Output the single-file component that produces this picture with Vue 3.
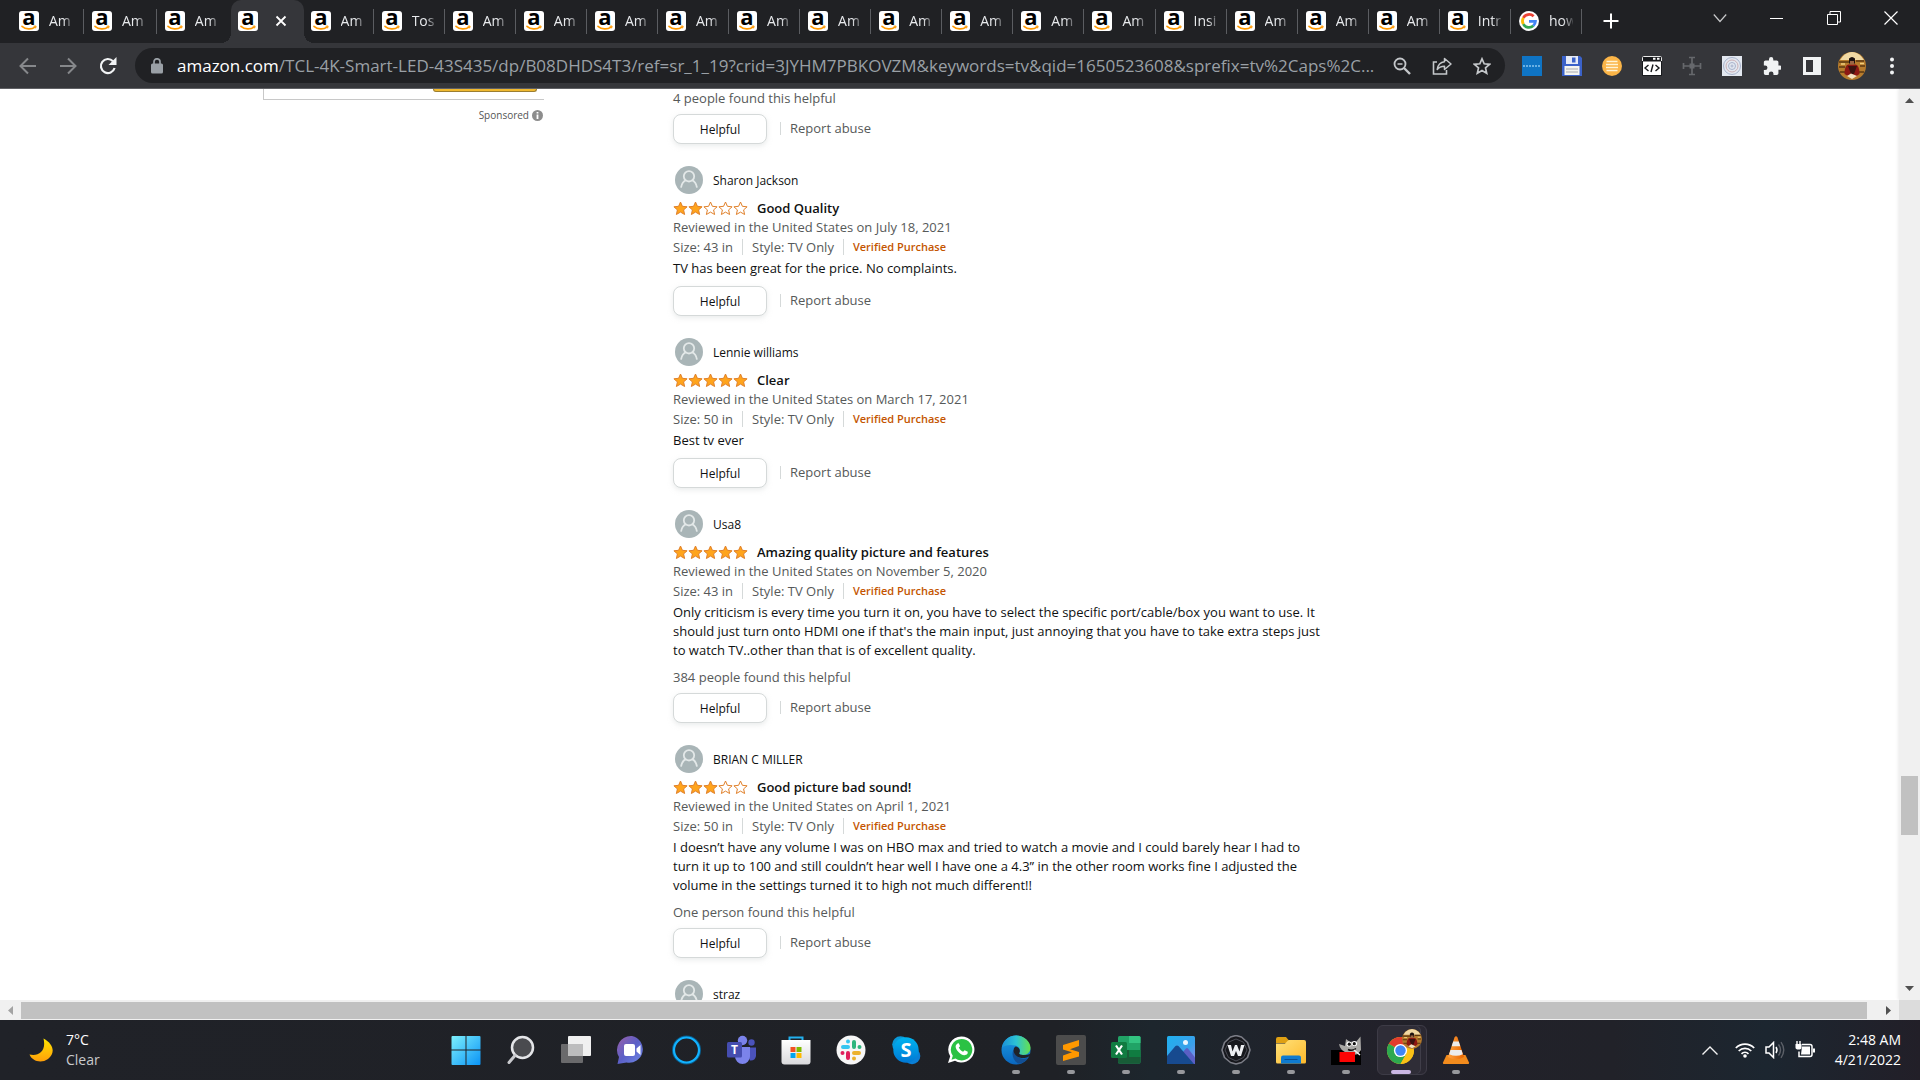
<script setup>
const tabs = [
  'Am', 'Am', 'Am', '', 'Am', 'Tos', 'Am', 'Am', 'Am', 'Am', 'Am',
  'Am', 'Am', 'Am', 'Am', 'Am', 'Insi', 'Am', 'Am', 'Am', 'Intr', 'how'
].map((title, i) => ({ title, active: i === 3, wide: i < 4, google: i === 21, line: i !== 2 && i !== 3 }))

const reviews = [
  {
    name: 'Sharon Jackson', stars: 2, title: 'Good Quality', date: 'July 18, 2021', size: '43 in',
    body: 'TV has been great for the price. No complaints.'
  },
  {
    name: 'Lennie williams', stars: 5, title: 'Clear', date: 'March 17, 2021', size: '50 in',
    body: 'Best tv ever'
  },
  {
    name: 'Usa8', stars: 5, title: 'Amazing quality picture and features', date: 'November 5, 2020', size: '43 in',
    body: 'Only criticism is every time you turn it on, you have to select the specific port/cable/box you want to use. It\nshould just turn onto HDMI one if that\'s the main input, just annoying that you have to take extra steps just\nto watch TV..other than that is of excellent quality.',
    votes: '384 people found this helpful'
  },
  {
    name: 'BRIAN C MILLER', stars: 3, title: 'Good picture bad sound!', date: 'April 1, 2021', size: '50 in',
    body: 'I doesn’t have any volume I was on HBO max and tried to watch a movie and I could barely hear I had to\nturn it up to 100 and still couldn’t hear well I have one a 4.3” in the other room works fine I adjusted the\nvolume in the settings turned it to high not much different!!',
    votes: 'One person found this helpful'
  }
]

const apps = [
  { id: 'start', label: 'Start' }, { id: 'search', label: 'Search' }, { id: 'taskview', label: 'Task view' },
  { id: 'chat', label: 'Chat' }, { id: 'cortana', label: 'Cortana' }, { id: 'teams', label: 'Teams' },
  { id: 'store', label: 'Store' }, { id: 'slack', label: 'Slack' }, { id: 'skype', label: 'Skype' },
  { id: 'whatsapp', label: 'WhatsApp' }, { id: 'edge', label: 'Edge', open: true },
  { id: 'sublime', label: 'Sublime Text', open: true }, { id: 'excel', label: 'Excel', open: true },
  { id: 'photos', label: 'Photos', open: true }, { id: 'words', label: 'Wave', open: true },
  { id: 'explorer', label: 'File Explorer', open: true }, { id: 'gimp', label: 'GIMP', open: true },
  { id: 'chrome', label: 'Chrome', open: true, current: true }, { id: 'vlc', label: 'VLC', open: true }
]
</script>

<template>
  <div class="screen">
    <svg class="defs" width="0" height="0" aria-hidden="true">
      <defs>
        <linearGradient id="gStart" x1="0" y1="0" x2="1" y2="1"><stop offset="0" stop-color="#7df0fd" /><stop offset="1" stop-color="#0a93f5" /></linearGradient>
        <linearGradient id="gChat" x1="0" y1="0" x2="1" y2="1"><stop offset="0" stop-color="#9a5fa8" /><stop offset=".5" stop-color="#5b5fc7" /><stop offset="1" stop-color="#6f8ae8" /></linearGradient>
        <linearGradient id="gMoon" x1="0" y1="0" x2="0" y2="1"><stop offset="0" stop-color="#ffe600" /><stop offset="1" stop-color="#ff9f0a" /></linearGradient>
        <linearGradient id="gStore" x1="0" y1="0" x2="0" y2="1"><stop offset="0" stop-color="#fff" /><stop offset="1" stop-color="#d9d9dc" /></linearGradient>
        <linearGradient id="gSkype" x1="0" y1="0" x2="0" y2="1"><stop offset="0" stop-color="#00b4f0" /><stop offset="1" stop-color="#0078d4" /></linearGradient>
        <linearGradient id="gEdgeTop" x1="0" y1="0" x2="1" y2="0"><stop offset="0" stop-color="#1b8fd8" /><stop offset=".5" stop-color="#2cc3d5" /><stop offset="1" stop-color="#66e04c" /></linearGradient>
        <linearGradient id="gEdge" x1="0" y1="0" x2="0" y2="1"><stop offset="0" stop-color="#1b9de2" /><stop offset="1" stop-color="#0a67c0" /></linearGradient>
        <linearGradient id="gFolder" x1="0" y1="0" x2="1" y2="1"><stop offset="0" stop-color="#ffe17a" /><stop offset="1" stop-color="#fdb92b" /></linearGradient>
        <linearGradient id="gPhoto" x1="0" y1="0" x2="1" y2="1"><stop offset="0" stop-color="#1fb0ef" /><stop offset=".6" stop-color="#3aa0ea" /><stop offset="1" stop-color="#9a86e6" /></linearGradient>
        <linearGradient id="gCone" x1="0" y1="0" x2="1" y2="0"><stop offset="0" stop-color="#ffa340" /><stop offset="1" stop-color="#e86500" /></linearGradient>
      </defs>
      <symbol id="amazon" viewBox="0 0 20 20">
        <rect width="20" height="20" rx="3" fill="#fff" />
        <text x="10" y="14" text-anchor="middle" font-family="Open Sans, sans-serif" font-weight="700" font-size="22" fill="#000">a</text>
        <path d="M3 15.4c3.6 3.2 9.6 3.3 13 .7" fill="none" stroke="#f90" stroke-width="1.7" stroke-linecap="round" />
        <path d="M14.6 15.2l2.5-.2-.5 2.3" fill="none" stroke="#f90" stroke-width="1" />
      </symbol>
      <symbol id="google" viewBox="0 0 20 20">
        <circle cx="10" cy="10" r="10" fill="#fff" />
        <g fill="none" stroke-width="2.8">
          <path d="M14.6 5.3A6.5 6.5 0 0 0 4.3 6.9" stroke="#ea4335" />
          <path d="M4.3 6.9a6.5 6.5 0 0 0 0 6.2" stroke="#fbbc05" />
          <path d="M4.3 13.1a6.5 6.5 0 0 0 10 1.7" stroke="#34a853" />
          <path d="M14.3 14.8a6.5 6.5 0 0 0 2.1-4.4H10" stroke="#4285f4" />
        </g>
      </symbol>
      <symbol id="star" viewBox="0 0 15 15">
        <path d="M7.5 1l1.9 4.3 4.7.5-3.5 3.1 1 4.6-4.1-2.4-4.1 2.4 1-4.6L.9 5.8l4.7-.5z" stroke="#e0802a" stroke-width="1" />
      </symbol>
      <symbol id="person" viewBox="0 0 28 28">
        <circle cx="14" cy="14" r="14" fill="#a9b5b7" />
        <g fill="none" stroke="#e3e8e8" stroke-width="1.8">
          <circle cx="14" cy="10.3" r="5.2" />
          <path d="M6 21.6c.8-4.2 3-6.6 5-7.4M22 21.6c-.8-4.2-3-6.6-5-7.4" />
        </g>
      </symbol>
      <symbol id="portrait" viewBox="0 0 28 28">
        <circle cx="14" cy="14" r="14" fill="#b67b2c" />
        <path d="M2 8l3-4q9-8 18 0l3 4z" fill="#f0d9a4" />
        <path d="M1 10h10M18 9h8M1 15h6M22 14h5M2 20h5M21 20h5" stroke="#5c3810" stroke-width="1.6" />
        <path d="M3 12h4M22 11.500h4" stroke="#f0cf7c" stroke-width="1.400" />
        <path d="M6.500 22q0-9 4-9.500h7q4 .5 4 9.500-7 6-15 0z" fill="#8d1813" />
        <path d="M10 14l3 8h3l3-8z" fill="#3b1310" />
        <path d="M11 6.500q3-3 6 0v5h-6z" fill="#1d1210" />
        <path d="M12 9h4v3.500h-4z" fill="#9c6444" />
        <path d="M9 24l4-2.500 6 2.500-5 3z" fill="#f3e2c0" />
      </symbol>
    </svg>

    <header class="tabbar">
      <nav class="tabs" aria-label="Tabs">
        <div v-for="(t, i) in tabs" :key="i" class="tab" :class="{ active: t.active, wide: t.wide, line: t.line }">
          <svg class="favicon"><use :href="t.google ? '#google' : '#amazon'" /></svg>
          <button v-if="t.active" class="plain close" aria-label="Close tab">
            <svg width="12" height="12" viewBox="0 0 12 12"><path d="M1.5 1.5l9 9m0-9l-9 9" stroke="#fff" stroke-width="1.8" /></svg>
          </button>
          <span v-else class="tab-title">{{ t.title }}</span>
        </div>
      </nav>
      <button class="plain newtab" aria-label="New tab">
        <svg width="16" height="16" viewBox="0 0 16 16"><path d="M8 .5v15M.5 8h15" stroke="#fff" stroke-width="2" /></svg>
      </button>
      <div class="winctl">
        <button class="plain" aria-label="Search tabs"><svg width="14" height="14" viewBox="0 0 14 14"><path d="M.8 3.5L7 10.500l6.200-7" fill="none" stroke="#c8c9cb" stroke-width="1.200" /></svg></button>
        <button class="plain" aria-label="Minimize"><svg width="14" height="14" viewBox="0 0 14 14"><path d="M0 7.500h13" stroke="#fff" /></svg></button>
        <button class="plain" aria-label="Restore"><svg width="14" height="14" viewBox="0 0 14 14"><path d="M.5 3.500h10v10h-10zM3 3V.5h10.500V11H11" fill="none" stroke="#fff" /></svg></button>
        <button class="plain" aria-label="Close"><svg width="14" height="14" viewBox="0 0 14 14"><path d="M.5.5l13 13m0-13l-13 13" stroke="#fff" stroke-width="1.200" /></svg></button>
      </div>
    </header>

    <div class="toolbar">
      <div class="navs">
        <button class="plain" aria-label="Back"><svg width="18" height="18" viewBox="0 0 18 18"><path d="M17 9H2m7-7.500L1.500 9 9 16.500" fill="none" stroke="#86888b" stroke-width="2" /></svg></button>
        <button class="plain" aria-label="Forward"><svg width="18" height="18" viewBox="0 0 18 18"><path d="M1 9h15M9 1.500L16.500 9 9 16.500" fill="none" stroke="#86888b" stroke-width="2" /></svg></button>
        <button class="plain" aria-label="Reload"><svg width="18" height="18" viewBox="0 0 18 18"><path d="M15.600 11A7 7 0 1 1 14 4.200" fill="none" stroke="#f1f3f4" stroke-width="2.200" /><path d="M17.500 0v8h-8z" fill="#f1f3f4" /></svg></button>
      </div>
      <div class="omnibox">
        <svg class="lock" width="12" height="16" viewBox="0 0 12 16"><rect y="5.500" width="12" height="10" rx="1.500" fill="#9aa0a6" /><path d="M3 6V3.800a3 3 0 0 1 6 0V6" fill="none" stroke="#9aa0a6" stroke-width="1.700" /></svg>
        <a class="url" href="#"><b>amazon.com</b>/TCL-4K-Smart-LED-43S435/dp/B08DHDS4T3/ref=sr_1_19?crid=3JYHM7PBKOVZM&amp;keywords=tv&amp;qid=1650523608&amp;sprefix=tv%2Caps%2C...</a>
        <button class="plain cell" aria-label="Zoom"><svg width="18" height="18" viewBox="0 0 18 18"><circle cx="7" cy="7" r="5.500" fill="none" stroke="#c4c7ca" stroke-width="1.800" /><path d="M11 11l6 6" stroke="#c4c7ca" stroke-width="2.400" /><path d="M4.500 7h5" stroke="#c4c7ca" stroke-width="1.500" /></svg></button>
        <button class="plain cell" aria-label="Share"><svg width="20" height="18" viewBox="0 0 20 18"><path d="M5 5H1.500v12h13v-4" fill="none" stroke="#c4c7ca" stroke-width="1.600" /><path d="M12.500 1.500L19 7l-6.500 5.500V9.300C9 9.300 7 10 5.200 12.500 5.800 8.500 8 5.200 12.500 4.800z" fill="none" stroke="#c4c7ca" stroke-width="1.500" stroke-linejoin="round" /></svg></button>
        <button class="plain cell" aria-label="Bookmark"><svg width="18" height="18" viewBox="0 0 18 18"><path d="M9 1.800l2.200 5 5.400.5-4.100 3.600 1.200 5.300L9 13.400l-4.700 2.800 1.200-5.300-4.100-3.600 5.400-.5z" fill="none" stroke="#c4c7ca" stroke-width="1.700" /></svg></button>
      </div>
      <div class="exts">
        <button class="plain cell" aria-label="Extension 1"><svg width="20" height="20" viewBox="0 0 20 20"><rect width="20" height="20" fill="#0f74c4" /><path d="M1 10h18" stroke="#69b0e4" stroke-width="2" stroke-dasharray="2 1" /></svg></button>
        <button class="plain cell" aria-label="Extension 2"><svg width="20" height="20" viewBox="0 0 20 20"><path d="M0 0h18l2 2v18H0z" fill="#3b62c9" /><rect x="4" width="12" height="8" fill="#e6ebf7" /><rect x="10" y="1.500" width="3.500" height="5" fill="#3b62c9" /><rect x="2.500" y="10" width="15" height="9" fill="#f5f5f0" /><path d="M4 13h12M4 16h12" stroke="#a9abb0" stroke-width="1.200" /></svg></button>
        <button class="plain cell" aria-label="Extension 3"><svg width="20" height="20" viewBox="0 0 20 20"><circle cx="10" cy="10" r="10" fill="#fbb548" /><path d="M4.500 5.500h11M4 8.500h12M4 11.500h12M4.500 14.500h11" stroke="#fff3d4" stroke-width="1.300" /></svg></button>
        <button class="plain cell" aria-label="Extension 4"><svg width="20" height="20" viewBox="0 0 20 20"><rect width="20" height="20" rx="1" fill="#17191c" /><path d="M.5 5V1.500q0-1 1-1h17q1 0 1 1V5" fill="none" stroke="#e8e8e8" /><rect x="1" y="5.500" width="18" height="13.500" fill="#fff" /><path d="M11 2.800h2.500M15 2.800h2.500" stroke="#fff" stroke-width="2" /><path d="M6.500 9l-3.500 3 3.500 3M13.500 9l3.500 3-3.500 3M11 8.500l-2 7.500" fill="none" stroke="#17191c" stroke-width="1.400" /></svg></button>
        <button class="plain cell" aria-label="Extension 5"><svg width="20" height="20" viewBox="0 0 20 20"><path d="M10 1v18M1 10h18M7 1.500h6M7 18.500h6M1.500 7v6M18.500 7v6" stroke="#66686c" stroke-width="1.700" /><rect x="7.500" y="7.500" width="5" height="5" fill="#66686c" /></svg></button>
        <button class="plain cell" aria-label="Extension 6"><svg width="20" height="20" viewBox="0 0 20 20"><rect width="20" height="20" fill="#e3e8f0" /><g fill="none" stroke="#a9b3cc" stroke-width="1"><circle cx="10" cy="10" r="8.500" /><circle cx="10" cy="10" r="6" stroke="#cbb0b6" /><circle cx="10" cy="10" r="3.500" /><circle cx="10" cy="10" r="1" /></g></svg></button>
        <button class="plain cell" aria-label="Extensions"><svg width="18" height="18" viewBox="1 1 21 21"><path fill="#f1f3f4" d="M20.500 11H19V7c0-1.100-.9-2-2-2h-4V3.500a2.500 2.500 0 0 0-5 0V5H4c-1.100 0-2 .9-2 2v3.800h1.500a2.700 2.700 0 0 1 0 5.400H2V20c0 1.100.9 2 2 2h3.800v-1.500a2.700 2.700 0 0 1 5.400 0V22H17c1.100 0 2-.9 2-2v-4h1.500a2.500 2.500 0 0 0 0-5z" /></svg></button>
        <button class="plain cell" aria-label="Side panel"><svg width="18" height="18" viewBox="0 0 18 18"><path fill="#f1f3f4" fill-rule="evenodd" d="M0 0h18v18H0zM3 3v12h7V3z" /></svg></button>
        <button class="plain cell" aria-label="Profile"><svg width="28" height="28"><use href="#portrait" /></svg></button>
        <button class="plain cell" aria-label="Menu"><svg width="4" height="18" viewBox="0 0 4 18"><g fill="#f1f3f4"><circle cx="2" cy="2.500" r="2" /><circle cx="2" cy="9" r="2" /><circle cx="2" cy="15.500" r="2" /></g></svg></button>
      </div>
    </div>

    <div class="viewport">
      <main class="page">
        <aside class="ad">
          <div class="adbox"><span class="adbtn"></span></div>
          <p class="sponsored">Sponsored
            <svg width="11" height="11" viewBox="0 0 11 11"><circle cx="5.500" cy="5.500" r="5.500" fill="#8d8d8d" /><path d="M5.500 2v1.600M5.500 4.500V9" stroke="#fff" stroke-width="1.800" /></svg>
          </p>
        </aside>
        <section class="reviews">
          <div class="review">
            <p class="votes">4 people found this helpful</p>
            <div class="actions"><button class="helpful">Helpful</button><a class="abuse" href="#">Report abuse</a></div>
          </div>
          <article v-for="r in reviews" :key="r.name" class="review">
            <a class="profile" href="#"><svg width="28" height="28"><use href="#person" /></svg>{{ r.name }}</a>
            <div class="headline">
              <span class="stars" role="img" :aria-label="r.stars + ' out of 5 stars'">
                <svg v-for="n in 5" :key="n" width="15" height="15" :class="n <= r.stars ? 'on' : 'off'"><use href="#star" /></svg>
              </span>
              <a class="rtitle" href="#">{{ r.title }}</a>
            </div>
            <p class="meta">Reviewed in the United States on {{ r.date }}</p>
            <p class="meta specs"><span>Size: {{ r.size }}</span><span>Style: TV Only</span><strong>Verified Purchase</strong></p>
            <p class="body">{{ r.body }}</p>
            <p v-if="r.votes" class="votes">{{ r.votes }}</p>
            <div class="actions"><button class="helpful">Helpful</button><a class="abuse" href="#">Report abuse</a></div>
          </article>
          <article class="review">
            <a class="profile" href="#"><svg width="28" height="28"><use href="#person" /></svg>straz</a>
          </article>
        </section>
      </main>
      <div class="vbar">
        <svg width="9" height="5" viewBox="0 0 9 5"><path d="M0 5l4.500-5L9 5z" fill="#505050" /></svg>
        <i class="before"></i><i class="thumb"></i><i class="after"></i>
        <svg width="9" height="5" viewBox="0 0 9 5"><path d="M0 0l4.500 5L9 0z" fill="#505050" /></svg>
      </div>
    </div>
    <div class="hbar">
      <svg width="21" height="9" viewBox="0 0 21 9"><path d="M13 0v9L8 4.500z" fill="#a3a3a3" /></svg>
      <i class="thumb"></i>
      <svg width="32" height="9" viewBox="0 0 32 9"><path d="M19 0v9l5-4.500z" fill="#505050" /></svg>
      <i class="corner"></i>
    </div>

    <footer class="taskbar">
      <button class="plain weather">
        <svg width="24" height="24" viewBox="0 0 24 24"><path d="M14.500.5C25 6 26.500 15.500 19 21 12 26 3 23 .5 16.500 10 18.500 17.500 13 14.500.5z" fill="url(#gMoon)" /></svg>
        <span>7°C<br><em>Clear</em></span>
      </button>
      <nav class="apps" aria-label="Taskbar">
        <button v-for="a in apps" :key="a.id" class="plain app" :class="{ open: a.open, current: a.current }" :aria-label="a.label">
          <svg width="30" height="30" viewBox="0 0 30 30">
            <g v-if="a.id === 'start'" fill="url(#gStart)"><path d="M.5 2q0-1 1-1h13v13.500H.5zM15.500 1h13q1 0 1 1v12.500h-14zM.5 15.500h14V30h-13q-1 0-1-1zM15.500 15.500h14V29q0 1-1 1h-13z" /></g>
            <g v-else-if="a.id === 'search'"><circle cx="16.500" cy="12.500" r="10.500" fill="#4a4b4f" stroke="#e4e5e8" stroke-width="2.500" /><path d="M9 20.500L3 27.500" stroke="#c9cace" stroke-width="3" stroke-linecap="round" /></g>
            <g v-else-if="a.id === 'taskview'"><rect x="0" y="9" width="22" height="19" rx="1" fill="#6a6a6c" /><rect x="7" y="1" width="23" height="20" rx="1" fill="#f0f0f0" /><rect x="7" y="9" width="15" height="12" fill="#bdbdbe" /></g>
            <g v-else-if="a.id === 'chat'"><path d="M16 1a13.500 13.500 0 1 1-5.500 26.500L1.500 29l1.500-7A14 14 0 0 1 16 1z" fill="url(#gChat)" /><rect x="8" y="9" width="11" height="12" rx="2" fill="#fff" /><path d="M20.500 13.500l4-3.500v10l-4-3.500z" fill="#fff" /></g>
            <g v-else-if="a.id === 'cortana'" fill="none"><circle cx="15.500" cy="15" r="13.300" stroke="#0a5d8c" stroke-width="2.500" /><circle cx="15.500" cy="15" r="12.500" stroke="#12b2ff" stroke-width="2.200" /></g>
            <g v-else-if="a.id === 'teams'"><circle cx="25.500" cy="7.500" r="3.200" fill="#4b53bc" /><path d="M19 12.500h11v8.500q-1 5-6 4.500z" fill="#4b53bc" /><circle cx="16.500" cy="5.500" r="4.700" fill="#7b83eb" /><path d="M9 12h15v9.500a7.500 7.500 0 0 1-15 0z" fill="#7b83eb" /><rect x="1" y="7" width="15" height="15.500" rx="1.500" fill="#454db0" /><text x="8.500" y="19" text-anchor="middle" font-family="Open Sans, sans-serif" font-weight="700" font-size="12" fill="#fff">T</text></g>
            <g v-else-if="a.id === 'store'"><path d="M8.500 7V2.500h13V7" fill="none" stroke="#22b0ee" stroke-width="2" /><path d="M.5 5h29v21.500q0 3-3 3h-23q-3 0-3-3z" fill="url(#gStore)" /><path d="M9.500 12h5v5h-5z" fill="#f25022" /><path d="M15.500 12h5v5h-5z" fill="#7fba00" /><path d="M9.500 18h5v5h-5z" fill="#00a4ef" /><path d="M15.500 18h5v5h-5z" fill="#ffb900" /></g>
            <g v-else-if="a.id === 'slack'" stroke-width="4" stroke-linecap="round"><circle cx="15" cy="15" r="14.500" fill="#f7f7f7" stroke="none" /><path d="M7 12h5M12 6.500v.1" stroke="#36c5f0" /><path d="M18 7v5M23.500 12v.1" stroke="#2eb67d" /><path d="M18 18h5M18 23.500v.1" stroke="#ecb22e" /><path d="M12 18v5M6.500 18v.1" stroke="#e01e5a" /></g>
            <g v-else-if="a.id === 'skype'"><circle cx="9.500" cy="9.500" r="8.300" fill="#0a98d8" /><circle cx="21" cy="21" r="8.300" fill="#0a7fd6" /><circle cx="15" cy="15" r="12.700" fill="url(#gSkype)" /><text x="15" y="22" text-anchor="middle" font-family="Open Sans, sans-serif" font-weight="700" font-size="20" fill="#fff">S</text></g>
            <g v-else-if="a.id === 'whatsapp'"><path d="M15.500 1.500a13 13 0 1 1-6.500 24.300L2 28l2.200-6.800A13 13 0 0 1 15.500 1.500z" fill="#fff" /><path d="M15.500 4a10.700 10.700 0 1 1-6 19.500l-4 1.200 1.300-3.900A10.700 10.700 0 0 1 15.500 4z" fill="#2bc244" /><path d="M11.500 8.500c-2.500 1.500-2.500 4.500.5 8s7 5 9.500 2.200l.3-1.900-3.200-1.600-1.500 1.600c-2-.7-3.500-2.300-4.300-4.200l1.300-1.400-1.300-2.900z" fill="#fff" /></g>
            <g v-else-if="a.id === 'edge'"><circle cx="15" cy="15" r="14.500" fill="url(#gEdge)" /><path d="M.8 12.500C3 4 9 .5 15 .5c8 0 14.500 6 14.500 12.300 0 4.700-3.500 7.200-7.500 7.200-3.500 0-4.500-1.500-3.500-2.500 1.500-2 .3-6-4-7C9 9.200 4 10 .8 12.500z" fill="url(#gEdgeTop)" /><path d="M12.500 15c-2 3.500-1 10 4.500 13.500 4.500.2 8.500-2.500 10.500-6-3.500 1.800-8 1.500-10.500-.5-2.200-1.700-3-4.500-2.200-6.500z" fill="#134f94" /><path d="M14.500 11.500c-2.500 1.500-2.700 6 .5 9s9 3.300 12 1.500l2.800-1.500v-2c-2 1.200-5 1.600-7.800 1.500-3.500-.1-4.500-1.500-3.500-2.500 1-1.700 0-5.500-4-6z" fill="#202329" /></g>
            <g v-else-if="a.id === 'sublime'"><rect width="30" height="30" rx="2" fill="#4c4c4c" /><path d="M23 5v6l-9 3.300 9 2.700v4.500L7 26v-5.500l9-3.200L7 14.500V10z" fill="#ff9800" /></g>
            <g v-else-if="a.id === 'excel'"><rect x="7" y="1" width="22.500" height="27.500" rx="1.500" fill="#21a366" /><path d="M18 1h10q1.500 0 1.500 1.500V8H18z" fill="#33c481" /><path d="M7 15h11v7H7z" fill="#185c37" /><path d="M18 15h11.500v7H18z" fill="#107c41" /><path d="M7 22h22.500v5q0 1.500-1.500 1.500H8.500Q7 28.500 7 27z" fill="#185c37" /><rect x="0" y="7" width="16" height="16" rx="1.500" fill="#107c41" /><path d="M5 10.500l6 9M11 10.500l-6 9" stroke="#fff" stroke-width="2.200" /></g>
            <g v-else-if="a.id === 'photos'"><rect x="1" y="1" width="28" height="28" rx="1.500" fill="url(#gPhoto)" /><path d="M17 17l3-3.500q1-1 2 0l7 9V29H17z" fill="#5a5fc4" /><path d="M1 21l8.500-10q1.500-1 3 0L28 29H1z" fill="#174a8f" /><circle cx="19.500" cy="7.500" r="2.500" fill="#eaf6ff" /></g>
            <g v-else-if="a.id === 'words'"><path d="M9.500 2l5.500-1.500L20.500 2l6 5.500L29 15l-2.500 7.500-6 5L15 29l-5.500-1.500-6-5L1 15l2.500-7.500z" fill="#16171c" stroke="#7b7d86" stroke-width="1.600" stroke-linejoin="round" /><path d="M15 4l7.500 3.200L26 15l-3.500 7.500L15 26l-7.500-3.500L4 15l3.500-7.800z" fill="none" stroke="#4a4c55" /><path d="M6.500 10h3.500l1.500 6.500L14 10h2l2.500 6.500L20 10h3.500L20 21h-3l-2-5-2 5h-3z" fill="#eceef2" /></g>
            <g v-else-if="a.id === 'explorer'"><path d="M0 4q0-2 2-2h8l3 3.500h-1V8H0z" fill="#dfa013" /><path d="M0 8.500h9L12.500 5H28q2 0 2 2v20q0 1.500-1.500 1.500h-27Q0 28.500 0 27z" fill="url(#gFolder)" /><path d="M5 28.500v-6q0-2 2-2h16q2 0 2 2v6z" fill="#0f7bd0" /><path d="M8.500 24.500h13" stroke="#0a4f93" /></g>
            <g v-else-if="a.id === 'gimp'"><rect y="15" width="30" height="15" fill="#000" /><path d="M8 9l6 2 1-7 4 3q3-1 6 0l4.500-5.500L30 15l-3 4q-5 2-10-1-8-2-9-9z" fill="#a9a8a5" /><circle cx="18" cy="9" r="2.600" fill="#fff" /><circle cx="23.500" cy="8.500" r="2.600" fill="#fff" /><circle cx="18.300" cy="9.200" r="1.600" fill="#111" /><circle cx="23.300" cy="8.700" r="1.600" fill="#111" /><rect x="8.500" y="17" width="15.500" height="10" fill="#fb0404" /><path d="M17 14.500q4 2 8-1" stroke="#111" stroke-width="1.400" fill="none" /><path d="M23 15l6 5" stroke="#eee" stroke-width="1.500" /></g>
            <g v-else-if="a.id === 'chrome'"><circle cx="14.500" cy="15.500" r="13.500" fill="#fbc116" /><path d="M14.500 15.500H28A13.500 13.500 0 0 0 2.800 8.750z" fill="#e33b2e" /><path d="M2.800 8.750A13.500 13.500 0 0 0 14.500 29l6-10.500-6-3z" fill="#2da94f" /><path d="M14.500 29l5.900-10.200L21 9h5.300A13.500 13.500 0 0 1 14.500 29z" fill="#fbc116" /><circle cx="14.500" cy="15.500" r="6.600" fill="#fff" /><circle cx="14.500" cy="15.500" r="5.200" fill="#3f86f5" /></g>
            <g v-else-if="a.id === 'vlc'"><path d="M5.500 20h19l3.500 7.500q.5 1.500-1 1.500H3q-1.500 0-1-1.500z" fill="#f28b1d" /><path d="M13.500 2.500Q15 0 16.500 2.500L23 22q-8 4.500-16 0z" fill="url(#gCone)" /><path d="M12.200 6.500h5.600l1.500 4.700h-8.600zM9.500 15h11l1.300 4.300q-6.800 3-13.600 0z" fill="#ececec" /></g>
          </svg>
          <svg v-if="a.current" class="badge" width="20" height="20"><use href="#portrait" /></svg>
        </button>
      </nav>
      <div class="tray">
        <button class="plain up" aria-label="Show hidden icons"><svg width="16" height="9" viewBox="0 0 16 9"><path d="M.5 8.500L8 1l7.500 7.500" fill="none" stroke="#f2f2f2" stroke-width="1.400" /></svg></button>
        <svg width="20" height="16" viewBox="0 0 20 16"><g fill="none" stroke="#fff" stroke-width="1.700"><path d="M.8 6a13 13 0 0 1 18.400 0M3.700 9a9 9 0 0 1 12.600 0M6.500 11.800a5 5 0 0 1 7 0" /></g><circle cx="10" cy="14" r="1.800" fill="#fff" /></svg>
        <svg width="20" height="18" viewBox="0 0 20 18"><g fill="none" stroke="#fff" stroke-width="1.500"><path d="M1 6h3l4.500-4.500v15L4 12H1z" /><path d="M11 6q2 3 0 6" /></g><path d="M13.500 3.500q4 5.500 0 11M16 1.200q5.500 7.800 0 15.600" fill="none" stroke="#5c6068" stroke-width="1.400" /></svg>
        <svg width="20" height="18" viewBox="0 0 20 18"><path d="M7 3.500h8q2 0 2 2v8q0 2-2 2H4v-5" fill="none" stroke="#fff" stroke-width="1.500" /><path d="M7 5.500h8v8H6z" fill="#fff" /><path d="M18 7.500h2v4h-2z" fill="#fff" /><path d="M.5 3h6v3.500q0 2-3 2t-3-2zM1.300 0h1.400v3H1.300zM4.300 0h1.400v3H4.300z" fill="#fff" /></svg>
        <div class="clock">2:48 AM<br>4/21/2022</div>
      </div>
    </footer>
  </div>
</template>

<style>
body { margin: 0; background: #fff; overflow: hidden; }
</style>

<style scoped>
.screen { display: flex; flex-direction: column; height: 100vh; font-family: "Open Sans", "Noto Sans", sans-serif; overflow: hidden; }
.screen *, .screen *::before, .screen *::after { box-sizing: border-box; }
.defs { position: absolute; }
svg { display: block; flex: none; }
p { margin: 0; }
a { color: inherit; text-decoration: none; }
.plain { border: 0; padding: 0; background: none; color: inherit; font: inherit; display: flex; align-items: center; justify-content: center; }

.tabbar { display: flex; flex: none; height: 43px; background: #202124; color: #e8eaed; padding: 0 1px 0 12px; }
.tabs { display: flex; flex: 1; min-width: 0; }
.tab { flex: 71 1 0; min-width: 0; position: relative; display: flex; align-items: center; gap: 10px; padding: 0 0 2px 7px; }
.tab.wide { flex-grow: 73; }
.tab.line::after { content: ""; position: absolute; right: 1px; top: 9px; width: 1px; height: 25px; background: #5b5d61; }
.tab.active { background: #35363a; border-radius: 10px 10px 0 0; }
.tab.active::before, .tab.active::after { content: ""; position: absolute; bottom: 0; width: 10px; height: 10px; }
.tab.active::before { left: -10px; background: radial-gradient(circle at 0 0, transparent 10px, #35363a 10px); }
.tab.active::after { right: -10px; background: radial-gradient(circle at 100% 0, transparent 10px, #35363a 10px); }
.favicon { width: 20px; height: 20px; }
.close { width: 26px; height: 20px; }
.tab-title { width: 24px; overflow: hidden; white-space: nowrap; font-size: 14px; line-height: 20px; mask-image: linear-gradient(90deg, #000 14px, transparent 26px); }
.newtab { width: 56px; padding-bottom: 2px; }
.winctl { display: flex; margin-left: 52px; height: 36px; }
.winctl button { width: 57px; }

.toolbar { display: flex; flex: none; height: 46px; background: #35363a; border-bottom: 1px solid #5f6064; align-items: center; padding-right: 8px; }
.navs { display: flex; padding-left: 8px; width: 135px; }
.navs button { width: 40px; height: 36px; }
.omnibox { flex: 1; min-width: 0; height: 35px; border-radius: 18px; background: #202124; display: flex; align-items: center; padding: 0 3px 0 16px; }
.url { flex: 1; min-width: 0; margin-left: 14px; font-size: 17px; line-height: 24px; color: #9aa0a6; white-space: nowrap; overflow: hidden; }
.url b { font-weight: 400; color: #fff; }
.cell { width: 40px; height: 34px; flex: none; }
.exts { display: flex; padding-left: 7px; }

.viewport { flex: 1; min-height: 0; display: flex; background: #fff; }
.page { flex: 1; min-width: 0; display: flex; align-items: flex-start; padding-left: 263px; overflow: hidden; height: 100%; }
.ad { width: 281px; flex: none; }
.adbox { height: 11px; border: solid #c8c8c8; border-width: 0 0 1px 1px; display: flex; justify-content: flex-end; align-items: flex-start; padding-right: 7px; }
.adbtn { width: 104px; height: 3px; background: #f0b92f; border: solid #9c7e31; border-width: 0 1px 1px; border-radius: 0 0 3px 3px; }
.sponsored { display: flex; justify-content: flex-end; align-items: center; gap: 3px; margin-top: 8px; padding-right: 1px; font-size: 10px; line-height: 15px; color: #555; }
.reviews { flex: 1; min-width: 0; padding-left: 129px; color: #0f1111; font-size: 13px; line-height: 19px; }
.review { margin-bottom: 22px; }
.votes { color: #565959; line-height: 18px; margin-bottom: 7px; }
.profile { display: flex; align-items: center; gap: 10px; height: 28px; margin: 0 0 4px 2px; font-size: 12px; }
.headline { display: flex; align-items: center; height: 20px; }
.stars { display: flex; margin-right: 9px; }
.on { fill: #ffa41c; }
.off { fill: #fff; }
.rtitle { font-weight: 600; }
.meta { color: #565959; white-space: nowrap; }
.specs { display: flex; align-items: center; margin-bottom: 3px; }
.specs span { border-right: 1px solid #d5d9d9; line-height: 16px; padding-right: 9px; margin-right: 9px; }
.specs strong { color: #c45500; font-size: 11px; font-weight: 600; }
.body { white-space: pre-line; margin-bottom: 8px; }
.actions { display: flex; align-items: flex-start; }
.helpful { width: 94px; height: 30px; border: 1px solid #d5d9d9; border-radius: 8px; background: #fff; color: #0f1111; font: 12px "Open Sans", sans-serif; padding: 0; box-shadow: 0 2px 5px rgba(213, 217, 217, .5); }
.abuse { border-left: 1px solid #d5d9d9; margin: 8px 0 0 13px; padding-left: 9px; color: #565959; line-height: 13px; }

.vbar { width: 21px; flex: none; background: #f0f0f0; display: flex; flex-direction: column; align-items: center; padding: 9px 0; box-shadow: -1px 0 3px rgba(0, 0, 0, .08); }
.vbar .before { flex: 666; }
.vbar .thumb { width: 17px; height: 59px; background: #c1c1c1; }
.vbar .after { flex: 149; }
.hbar { flex: none; height: 20px; background: #f0f0f0; display: flex; align-items: center; }
.hbar .thumb { flex: 1; height: 17px; margin-top: 1px; background: #c1c1c1; }
.corner { width: 21px; height: 20px; background: #dcdcdc; }

.taskbar { flex: none; height: 60px; display: grid; grid-template-columns: 1fr auto 1fr; align-items: center; background: linear-gradient(90deg, #202228, #1f2126 55%, #1d262d 60%, #22212a 72%, #212229 84%, #1c2630 92%, #221f28); color: #fff; font-size: 14px; line-height: 20px; }
.weather { justify-self: start; margin-left: 29px; gap: 13px; text-align: left; }
.weather em { font-style: normal; color: #c9cacc; }
.apps { display: flex; padding-left: 2px; }
.app { width: 55px; height: 60px; position: relative; }
.app svg { position: relative; }
.app.open::after { content: ""; position: absolute; bottom: 6px; left: 50%; margin-left: -4px; width: 8px; height: 4px; border-radius: 2px; background: #97989c; }
.app.current::before { content: ""; position: absolute; top: 5px; left: 3px; width: 50px; height: 50px; border: 1px solid #3d3b46; border-radius: 6px; background: #2f2d37; box-shadow: inset -5px 0 #2a2832, inset -6px 0 #403e49; }
.app.current::after { width: 20px; margin-left: -10px; background: #cbb7e4; }
.app .badge { position: absolute; left: 28px; top: 9px; }
.tray { justify-self: end; display: flex; align-items: center; margin-right: 19px; }
.tray .up { width: 16px; height: 30px; margin-right: 17px; }
.tray > svg { margin-right: 10px; }
.clock { margin-left: 10px; text-align: right; }
</style>
